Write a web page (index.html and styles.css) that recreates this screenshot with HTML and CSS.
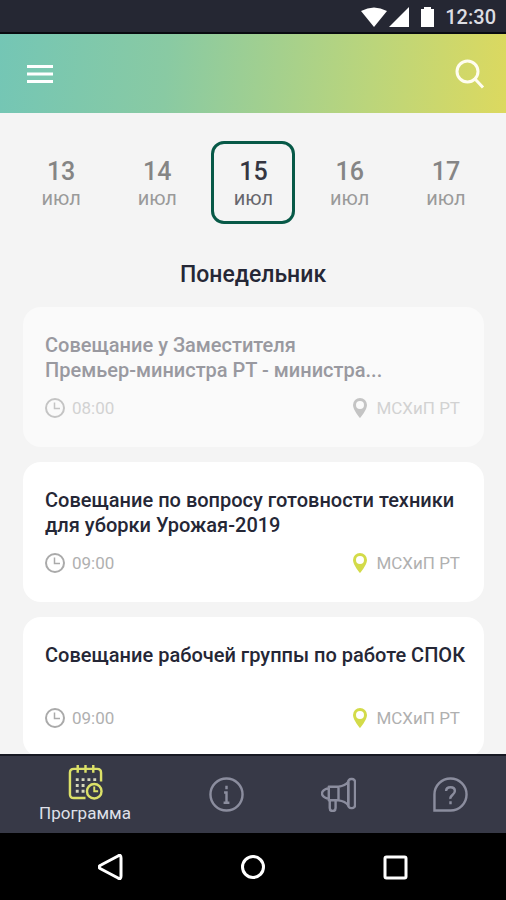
FILE: index.html
```html
<!DOCTYPE html>
<html lang="ru">
<head>
<meta charset="utf-8">
<meta name="viewport" content="width=device-width, initial-scale=1">
<title>Программа</title>
<link rel="stylesheet" href="styles.css">
</head>
<body>
<svg class="defs" aria-hidden="true">
  <symbol id="clock" viewBox="0 0 20 20"><circle cx="10" cy="10" r="9" fill="none" stroke="currentColor" stroke-width="2"/><path d="M9.500 4.500v6H15" fill="none" stroke="currentColor" stroke-width="1.500"/></symbol>
  <symbol id="pin" viewBox="0 0 14 20"><path fill-rule="evenodd" d="M7 0a7 7 0 0 0-7 7c0 5 7 13 7 13s7-8 7-13a7 7 0 0 0-7-7Zm0 3a4 4 0 1 1 0 8 4 4 0 0 1 0-8Z" fill="currentColor"/></symbol>
</svg>
<div class="status">
  <svg class="status-icons" viewBox="0 0 76 20" fill="#fff" aria-hidden="true"><path d="M2 4Q15-3 28 4L15 20ZM30 20 50 0v20ZM62 2h3V0h7v2h3v18H62Z"/></svg>
  <time>12:30</time>
</div>
<header class="toolbar">
  <button class="icon-button" aria-label="Меню"><svg width="26" height="18" viewBox="0 0 26 18" stroke="#fff" stroke-width="3"><path d="M0 1.500h26M0 9h26M0 16.500h26"/></svg></button>
  <button class="icon-button" aria-label="Поиск"><svg width="30" height="30" viewBox="0 0 30 30" fill="none" stroke="#fffdf0" stroke-width="3"><circle cx="12.500" cy="12.500" r="10.500"/><path d="m20 20 8 8.500"/></svg></button>
</header>
<main class="content">
  <div class="days">
    <button class="day"><b>13</b><span>июл</span></button>
    <button class="day"><b>14</b><span>июл</span></button>
    <button class="day selected" aria-pressed="true"><b>15</b><span>июл</span></button>
    <button class="day"><b>16</b><span>июл</span></button>
    <button class="day"><b>17</b><span>июл</span></button>
  </div>
  <h1>Понедельник</h1>
  <div class="events">
    <article class="card past">
      <h2>Совещание у Заместителя<br>Премьер-министра РТ - министра...</h2>
      <div class="meta"><svg class="clock"><use href="#clock"/></svg><time>08:00</time><svg class="pin"><use href="#pin"/></svg><span>МСХиП РТ</span></div>
    </article>
    <article class="card">
      <h2>Совещание по вопросу готовности техники<br>для уборки Урожая-2019</h2>
      <div class="meta"><svg class="clock"><use href="#clock"/></svg><time>09:00</time><svg class="pin"><use href="#pin"/></svg><span>МСХиП РТ</span></div>
    </article>
    <article class="card">
      <h2>Совещание рабочей группы по работе СПОК</h2>
      <div class="meta"><svg class="clock"><use href="#clock"/></svg><time>09:00</time><svg class="pin"><use href="#pin"/></svg><span>МСХиП РТ</span></div>
    </article>
  </div>
</main>
<nav class="tabs">
  <a class="tab active" href="#program">
    <svg viewBox="0 0 36 36" fill="none" stroke="currentColor" stroke-width="2.500"><path d="M18 34H6q-4 0-4-4V8q0-4 4-4h24q4 0 4 4v9M10 0v8m8-8v8m8-8v8"/><circle cx="27" cy="27" r="7.500"/><path d="M27 22v5h4" stroke-width="2"/><path d="M8 15h22M8 21h12M8 27h9" stroke="#d5d6bc" stroke-width="3" stroke-dasharray="3 3"/></svg>
    <span>Программа</span>
  </a>
  <a class="tab" href="#info" aria-label="Информация"><svg viewBox="0 0 36 36" fill="none" stroke="currentColor" stroke-width="2.500"><circle cx="18" cy="18" r="16.500"/><path d="M15.500 16H18v10M15 26.500h6M18 9v3.500"/></svg></a>
  <a class="tab" href="#news" aria-label="Новости"><svg viewBox="0 0 36 36" fill="none" stroke="currentColor" stroke-width="2.500" stroke-linejoin="round"><path d="M8 10h10v14H8ZM8 12H6q-5 2-5 5t5 5h2M18 10q7-1 10-5v24q-3-4-10-5M9 24v8q0 3 3 3t3-3v-8"/><rect x="28" y="2" width="7" height="30" rx="3"/></svg></a>
  <a class="tab" href="#help" aria-label="Помощь"><svg viewBox="0 0 36 36" fill="none" stroke="currentColor" stroke-width="2.500"><path d="M1.500 34.500V18A16.500 16.500 0 1 1 18 34.500Z"/><path d="M13.500 14.500q0-4 4.500-4t4.500 4q0 2-2.500 4t-2 4M18 25v3"/></svg></a>
</nav>
<div class="system">
  <button aria-label="Назад"><svg viewBox="0 0 26 26"><path d="M20 2Q23 0 23 4v18q0 4-3 2L3 15q-4-2 0-4Z"/></svg></button>
  <button aria-label="Домой"><svg viewBox="0 0 26 26"><circle cx="13" cy="13" r="10.500"/></svg></button>
  <button aria-label="Недавние"><svg viewBox="0 0 26 26"><rect x="3" y="3" width="21" height="21" rx="1.500"/></svg></button>
</div>
</body>
</html>
```
FILE: styles.css
```css
* { box-sizing: border-box; }
body {
  margin: 0;
  height: 100vh;
  display: flex;
  flex-direction: column;
  background: #f4f4f4;
  color: #252736;
  font-family: Roboto, sans-serif;
}
button { padding: 0; border: 0; background: none; color: inherit; font: inherit; cursor: pointer; }
svg { display: block; flex: none; }
.defs { position: absolute; width: 0; height: 0; }

.status {
  flex: none;
  height: 34px;
  display: flex;
  align-items: center;
  justify-content: flex-end;
  gap: 10px;
  padding: 2px 10px 0;
  background: #252733;
  border-bottom: 2px solid #080b10;
  color: #dcdde2;
  font-size: 20px;
  font-weight: 500;
}
.status-icons { width: 76px; height: 20px; }

.toolbar {
  flex: none;
  height: 79px;
  display: flex;
  align-items: center;
  justify-content: space-between;
  padding: 0 21px 0 27px;
  background: linear-gradient(95deg, #74c6b5, #89caa3 33%, #bbd57b 73%, #dcd95f);
}
.icon-button { display: grid; place-items: center; min-height: 48px; }

.content { flex: 1; min-height: 0; overflow: hidden; padding-top: 28px; }
.days {
  display: grid;
  grid-template-columns: repeat(5, 1fr);
  justify-items: center;
  padding: 0 12px 0 13px;
}
.day {
  width: 84px;
  height: 83px;
  display: flex;
  flex-direction: column;
  align-items: center;
  justify-content: center;
  padding-top: 3px;
  border-radius: 13px;
  color: #9a9a9a;
  font-size: 20px;
  line-height: 24px;
}
.day b { font-size: 25px; font-weight: 500; line-height: 28px; color: #858585; }
.day.selected { border: 3px solid #075947; color: #66666c; }
.day.selected b { color: #353641; }
h1 { margin: 37px 0 18px; text-align: center; font-size: 23px; line-height: 28px; font-weight: 500; }

.events { display: grid; grid-template-columns: minmax(0, 1fr); gap: 15px; padding: 0 22px 0 23px; }
.card {
  height: 140px;
  display: flex;
  flex-direction: column;
  justify-content: space-between;
  padding: 26px 24px 29px 22px;
  border-radius: 18px;
  background: #fff;
}
h2 { margin: 0; font-size: 20px; font-weight: 500; line-height: 25px; white-space: nowrap; }
.meta { display: flex; align-items: center; color: #b0b0b0; font-size: 17px; line-height: 20px; }
.clock { width: 20px; height: 20px; margin-right: 7px; color: #aaa; }
.pin { width: 14px; height: 20px; margin: 0 9px 0 auto; color: #d3db49; }
.past { background: #fafafa; color: #9999a0; }
.past .meta { color: #d2d2d2; }
.past .clock, .past .pin { color: #c4c4c4; }

.tabs {
  flex: none;
  height: 79px;
  display: grid;
  grid-template-columns: 170px 1fr 1fr 1fr;
  background: #373947;
  border-top: 2px solid #171923;
}
.tab {
  display: flex;
  flex-direction: column;
  align-items: center;
  justify-content: center;
  color: #8b8d9e;
  text-decoration: none;
  font-size: 17px;
  line-height: 22px;
}
.tab svg { width: 35px; height: 35px; }
.tab span { color: #dfe0e9; }
.active { color: #dce168; gap: 2px; }

.system {
  flex: none;
  height: 67px;
  display: grid;
  grid-template-columns: repeat(3, 142px);
  justify-content: center;
  background: #000;
}
.system button { display: grid; place-items: center; }
.system svg { width: 26px; height: 26px; fill: none; stroke: #fff; stroke-width: 3; }
```
